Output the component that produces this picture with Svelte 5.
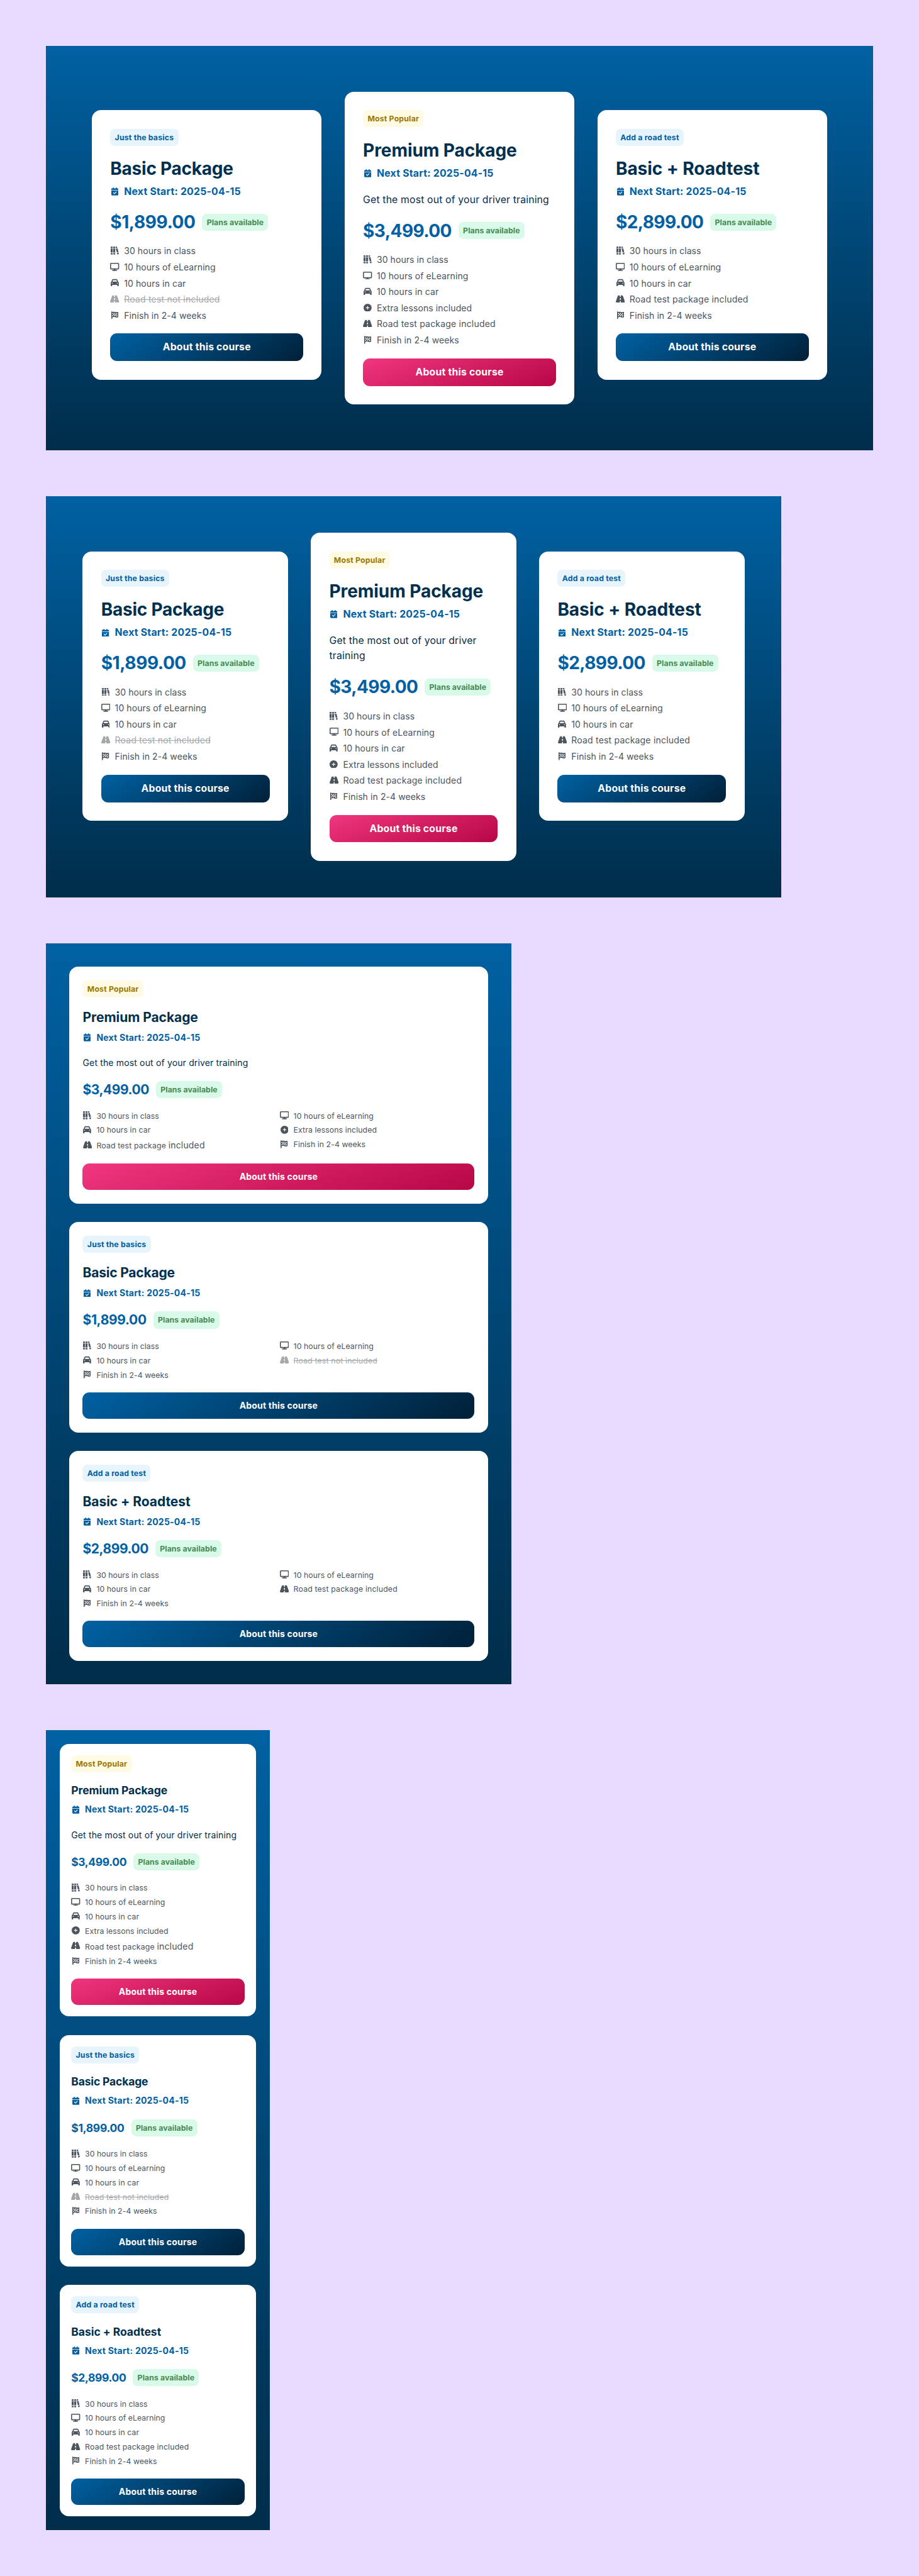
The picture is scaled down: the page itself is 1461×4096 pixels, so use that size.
<script>
  // Icon glyphs: view box width (height is always 512) and outline
  const icons = {
    calendar: {
      w: 448,
      d: 'M128 0c17.7 0 32 14.3 32 32V64H288V32c0-17.7 14.3-32 32-32s32 14.3 32 32V64h48c26.5 0 48 21.5 48 48v48H0V112C0 85.5 21.5 64 48 64H96V32c0-17.7 14.3-32 32-32zM0 192H448V464c0 26.5-21.5 48-48 48H48c-26.5 0-48-21.5-48-48V192zM329 305c9.4-9.4 9.4-24.6 0-33.9s-24.6-9.4-33.9 0l-95 95-47-47c-9.4-9.4-24.6-9.4-33.9 0s-9.4 24.6 0 33.9l64 64c9.4 9.4 24.6 9.4 33.9 0L329 305z'
    },
    books: {
      w: 512,
      d: 'M32 0H96A32 32 0 0 1 128 32V96H0V32A32 32 0 0 1 32 0zM0 128H128V384H0zM0 416H128V480A32 32 0 0 1 96 512H32A32 32 0 0 1 0 480zM192 0H256A32 32 0 0 1 288 32V96H160V32A32 32 0 0 1 192 0zM160 128H288V384H160zM160 416H288V480A32 32 0 0 1 256 512H192A32 32 0 0 1 160 480zM320 32Q320 10 342 5L384 0Q404 -2 410 18L424 74L320 102zM328 134L432 106L496 350L393 378zM401 409L504 381L511 440Q518 474 490 484L446 508Q424 516 416 490z'
    },
    display: {
      w: 576,
      d: 'M64 0C28.7 0 0 28.7 0 64V352c0 35.3 28.7 64 64 64H240l-10.7 32H160c-17.7 0-32 14.3-32 32s14.3 32 32 32H416c17.7 0 32-14.3 32-32s-14.3-32-32-32H346.7L336 416H512c35.3 0 64-28.7 64-64V64c0-35.3-28.7-64-64-64H64zM512 64V352H64V64H512z'
    },
    car: {
      w: 512,
      d: 'M135.2 117.4L109.1 192H402.9l-26.1-74.6C372.3 104.6 360.2 96 346.6 96H165.4c-13.6 0-25.7 8.6-30.2 21.4zM39.6 196.8L74.8 96.3C88.3 57.8 124.6 32 165.4 32H346.6c40.8 0 77.1 25.8 90.6 64.3l35.2 100.5c23.2 9.6 39.6 32.5 39.6 59.2V448c0 17.7-14.3 32-32 32H448c-17.7 0-32-14.3-32-32V400H96v48c0 17.7-14.3 32-32 32H32c-17.7 0-32-14.3-32-32V256c0-26.7 16.4-49.6 39.6-59.2zM128 288a32 32 0 1 0 -64 0 32 32 0 1 0 64 0zm288 32a32 32 0 1 0 0-64 32 32 0 1 0 0 64z'
    },
    plus: {
      w: 512,
      d: 'M256 512A256 256 0 1 0 256 0a256 256 0 1 0 0 512zM232 344V280H168c-13.3 0-24-10.7-24-24s10.7-24 24-24h64V168c0-13.3 10.7-24 24-24s24 10.7 24 24v64h64c13.3 0 24 10.7 24 24s-10.7 24-24 24H280v64c0 13.3-10.7 24-24 24s-24-10.7-24-24z'
    },
    road: {
      w: 576,
      d: 'M256 32H181.2c-27.1 0-51.3 17.1-60.3 42.6L3.1 407.2C1.1 413 0 419.2 0 425.4C0 455.5 24.5 480 54.6 480H256V416c0-17.7 14.3-32 32-32s32 14.3 32 32v64H521.4c30.2 0 54.6-24.5 54.6-54.6c0-6.2-1.1-12.4-3.1-18.2L455.1 74.6C446 49.1 421.9 32 394.8 32H320V96c0 17.7-14.3 32-32 32s-32-14.3-32-32V32zm64 192v64c0 17.7-14.3 32-32 32s-32-14.3-32-32V224c0-17.7 14.3-32 32-32s32 14.3 32 32z'
    },
    flag: {
      w: 448,
      d: 'M32 0C49.7 0 64 14.3 64 32V48l69-17.2c38.1-9.5 78.3-5.1 113.5 12.5c46.3 23.2 100.8 23.2 147.1 0l9.6-4.8C423.8 28.1 448 43.1 448 66.1V345.8c0 13.3-8.3 25.3-20.8 30l-34.7 13c-46.2 17.3-97.6 14.6-141.7-7.4c-37.9-19-81.3-23.7-122.5-13.4L64 384v96c0 17.7-14.3 32-32 32s-32-14.3-32-32V32C0 14.3 14.3 0 32 0zM64 187.1l64-13.9v65.5L64 252.6V318l48.8-12.2c5.1-1.3 10.1-2.4 15.2-3.3V238.7l38.9-8.4c8.3-1.8 16.7-2.5 25.1-2.1v-64c13.6 .4 27.2 2.6 40.4 6.4l23.6 6.9v66.7l-41.7-12.3c-7.3-2.1-14.8-3.4-22.3-3.8v71.4c21.8 1.9 43.3 6.7 64 14.4V244.2l22.7 6.7c13.5 4 27.3 6.4 41.3 7.4V194c-7.8-.8-15.6-2.3-23.2-4.5l-40.8-12v-62c-13-3.8-25.8-8.8-38.2-15c-8.2-4.1-16.9-7-25.8-8.8v72.4c-13-.4-26 .8-38.7 3.6L128 173.2V98L64 114v73.1zM320 335.7c16.8 1.5 33.9-.7 50-6.8l14-5.2V251.7l-7.9 1.8c-18.4 4.3-37.3 5.7-56.1 4.5v77.7zm64-149.4V115.4c-20.9 6.1-42.4 9.1-64 9.1V194c13.9 1.4 28 .5 41.7-2.6l22.3-5.1z'
    }
  };

  const shared = {
    inClass: { icon: 'books', text: '30 hours in class', track: 0.004 },
    online: { icon: 'display', text: '10 hours of eLearning', track: 0.005 },
    inCar: { icon: 'car', text: '10 hours in car', track: 0.006 },
    extra: { icon: 'plus', text: 'Extra lessons included', track: 0.007 },
    roadTest: { icon: 'road', text: 'Road test package', tail: 'included', track: 0.0135 },
    noRoadTest: { icon: 'road', text: 'Road test not included', track: 0.0135, off: true },
    finish: { icon: 'flag', text: 'Finish in 2-4 weeks', track: 0.006 }
  };
  const { inClass, online, inCar, extra, roadTest, noRoadTest, finish } = shared;

  const basic = {
    badge: 'Just the basics',
    name: 'Basic Package',
    track: -0.009,
    price: '$1,899.00',
    priceTrack: -0.016,
    features: [inClass, online, inCar, noRoadTest, finish]
  };
  const premium = {
    badge: 'Most Popular',
    name: 'Premium Package',
    track: -0.003,
    price: '$3,499.00',
    priceTrack: -0.021,
    blurb: 'Get the most out of your driver training',
    featured: true,
    features: [inClass, online, inCar, extra, roadTest, finish]
  };
  const plusRoad = {
    badge: 'Add a road test',
    name: 'Basic + Roadtest',
    track: -0.002,
    price: '$2,899.00',
    priceTrack: -0.021,
    features: [inClass, online, inCar, roadTest, finish]
  };

  const panels = [
    { size: 'desktop', plans: [basic, premium, plusRoad] },
    { size: 'laptop', plans: [basic, premium, plusRoad] },
    { size: 'tablet', plans: [premium, basic, plusRoad] },
    { size: 'mobile', plans: [premium, basic, plusRoad] }
  ];
</script>

{#snippet glyph(name)}
  <span class="icon">
    <svg viewBox="0 0 {icons[name].w} 512" aria-hidden="true"><path fill-rule="evenodd" d={icons[name].d} /></svg>
  </span>
{/snippet}

<main>
  {#each panels as panel}
    <section class="panel {panel.size}">
      {#each panel.plans as plan}
        <article class="card" class:featured={plan.featured}>
          <span class="badge">{plan.badge}</span>
          <h2 style:letter-spacing="{plan.track}em">{plan.name}</h2>
          <p class="start">{@render glyph('calendar')}<span>Next Start: 2025-04-15</span></p>
          {#if plan.blurb}<p class="blurb">{plan.blurb}</p>{/if}
          <div class="cost">
            <strong style:letter-spacing="{plan.priceTrack}em">{plan.price}</strong>
            <span class="badge plans">Plans available</span>
          </div>
          <ul>
            {#each plan.features as f}
              <li class:off={f.off}>
                {@render glyph(f.icon)}
                <span class="label" style:letter-spacing="{f.track}em">{f.text}{#if f.tail}{' '}<span class="tail">{f.tail}</span>{/if}</span>
              </li>
            {/each}
          </ul>
          <button>About this course</button>
        </article>
      {/each}
    </section>
  {/each}
</main>

<style>
  :global(body) {
    background: #e9daff;
  }

  main {
    zoom: 0.9132;
    display: flex;
    flex-direction: column;
    align-items: flex-start;
    gap: 80px;
    padding: 80px;
    font-family: Inter, 'Liberation Sans', sans-serif;
    color: #00304f;
  }

  .panel {
    --pad-x: 32px;
    --pad-y: 32px;
    --title: 30.7px;
    --title-line: 40px;
    --start-gap: 7px;
    --body: 17.28px;
    --body-line: 26px;
    --blurb-line: 27px;
    --cost-line: 40px;
    --item: 15.36px;
    --item-line: 24px;
    --list-gap: 18.7px;
    --button: 48px;
    box-sizing: border-box;
    display: grid;
    background: linear-gradient(180deg, #0061a2, #002d4a);
  }

  .desktop,
  .laptop {
    grid-template-columns: repeat(3, 1fr);
    align-items: start;
    gap: 40px;
  }

  .desktop {
    width: 1440px;
    padding: 80px;
  }

  .laptop {
    width: 1280px;
    padding: 64px;
  }

  .desktop .card:not(.featured),
  .laptop .card:not(.featured) {
    margin-top: 32px;
  }

  .tablet,
  .mobile {
    --body: 15.36px;
    --body-line: 24px;
    --blurb-line: 24px;
    --start-gap: 8px;
    --cost-line: 30px;
    --item: 13.44px;
    --item-line: 21px;
    --list-gap: 20px;
    --button: 46px;
    gap: 32px;
  }

  .tablet {
    --pad-x: 24px;
    --pad-y: 24px;
    --title: 23px;
    --title-line: 30px;
    width: 810px;
    padding: 40px;
  }

  .mobile {
    --pad-x: 20px;
    --pad-y: 20px;
    --title: 19.2px;
    --title-line: 25px;
    width: 390px;
    padding: 24px;
  }

  .card {
    display: flex;
    flex-direction: column;
    align-items: stretch;
    padding: var(--pad-y) var(--pad-x);
    border-radius: 16px;
    background: #fff;
  }

  .badge {
    align-self: flex-start;
    padding: 0 8px;
    border-radius: 8px;
    background: #e8f4fc;
    color: #0060a3;
    font-size: 13.44px;
    font-weight: 700;
    line-height: 29.7px;
    letter-spacing: 0.016em;
    white-space: nowrap;
  }

  .featured > .badge {
    background: #fffae3;
    color: #9b7800;
  }

  .badge.plans {
    align-self: center;
    background: #d9f9e9;
    color: #468a50;
    letter-spacing: 0.007em;
  }

  h2 {
    margin: 20px 0 0;
    font-size: var(--title);
    line-height: var(--title-line);
    font-weight: 700;
    white-space: nowrap;
  }

  .start {
    display: flex;
    align-items: center;
    gap: 8px;
    margin: var(--start-gap) 0 0;
    color: #0060a3;
    font-size: var(--body);
    line-height: var(--body-line);
    font-weight: 700;
    letter-spacing: 0.0155em;
    white-space: nowrap;
  }

  .blurb {
    margin: 20px 0 0;
    font-size: var(--body);
    line-height: var(--blurb-line);
    letter-spacing: 0.0104em;
  }

  .cost {
    display: flex;
    align-items: center;
    gap: 12px;
    height: var(--cost-line);
    margin-top: 20px;
  }

  .cost strong {
    color: #0060a3;
    font-size: var(--title);
    line-height: var(--cost-line);
  }

  ul {
    display: grid;
    align-items: start;
    gap: 4px;
    margin: var(--list-gap) 0 19.6px;
    padding: 0;
    list-style: none;
  }

  .tablet ul {
    grid-template-columns: 1fr 1fr;
  }

  li {
    display: flex;
    align-items: center;
    gap: 8px;
    color: #4c545d;
    font-size: var(--item);
    line-height: var(--item-line);
    white-space: nowrap;
  }

  .off {
    color: #a5a8ab;
  }

  .off .label {
    text-decoration: line-through;
  }

  /* The featured plan keeps the larger body size on its last word when compact */
  .tablet .featured .tail,
  .mobile .featured .tail {
    font-size: 15.36px;
    line-height: 24px;
  }

  .icon {
    display: flex;
    flex: none;
    justify-content: center;
    width: 16px;
  }

  li .icon {
    padding-bottom: 1.5px;
  }

  .icon svg {
    display: block;
    height: 14px;
    fill: currentColor;
  }

  button {
    height: var(--button);
    padding: 0;
    border: 0;
    border-radius: 12px;
    background: linear-gradient(145deg, #0061a2, #002038);
    color: #fff;
    font: 700 var(--body) / 1 Inter, 'Liberation Sans', sans-serif;
    letter-spacing: 0.013em;
  }

  .featured button {
    background: linear-gradient(160deg, #f0367f, #b70745);
  }
</style>
